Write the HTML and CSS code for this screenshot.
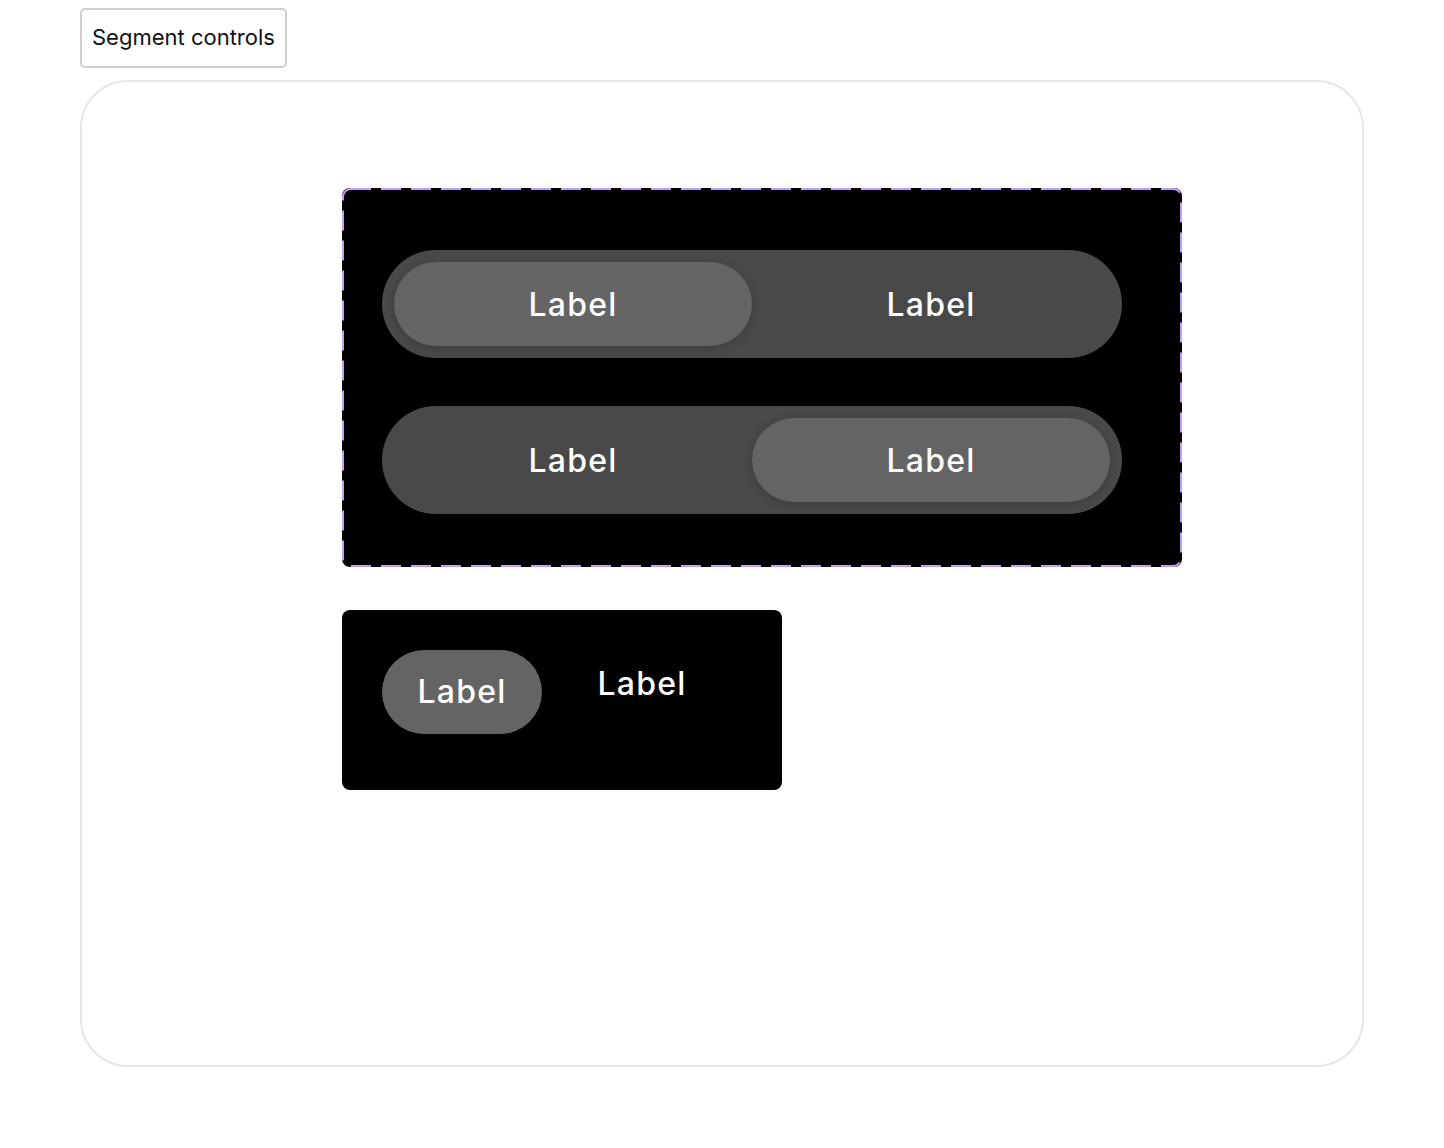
FILE: index.html
```html
<!DOCTYPE html>
<html>
<head>
<meta charset="utf-8">
<link rel="stylesheet" href="styles.css">
</head>
<body>
<div class="page">
  <button class="title-btn">Segment controls</button>
  <div class="card">
    <div class="demo">
      <svg class="dash" width="840" height="379" viewBox="0 0 840 379" aria-hidden="true">
        <rect x="1" y="1" width="838" height="377" rx="8" ry="8" fill="none" stroke="#c49bff" stroke-width="2" stroke-dasharray="20 10"></rect>
      </svg>
      <div class="segment">
        <div class="seg-item active">Label</div>
        <div class="seg-item">Label</div>
      </div>
      <div class="segment">
        <div class="seg-item">Label</div>
        <div class="seg-item active">Label</div>
      </div>
    </div>
    <div class="demo2">
      <div class="pill active">Label</div>
      <div class="pill plain">Label</div>
    </div>
  </div>
</div>
</body>
</html>
```

FILE: styles.css
```css
html, body {
  margin: 0;
  padding: 0;
  background: #fff;
  font-family: Inter, "Liberation Sans", sans-serif;
}
.page {
  padding: 8px 80px 0 80px;
  display: flex;
  flex-direction: column;
  align-items: flex-start;
  gap: 12px;
}
.title-btn {
  font-family: Inter, "Liberation Sans", sans-serif;
  font-size: 22px;
  color: #111;
  background: #fff;
  border: 2px solid #cfcfcf;
  border-radius: 5px;
  height: 60px;
  padding: 0 10px 3px 10px;
  margin: 0;
}
.card {
  box-sizing: border-box;
  width: 1284px;
  height: 987px;
  border: 2px solid #e6e6e6;
  border-radius: 48px;
  padding: 106px 0 0 260px;
  display: flex;
  flex-direction: column;
  align-items: flex-start;
  gap: 43px;
}
.demo {
  position: relative;
  box-sizing: border-box;
  width: 840px;
  height: 379px;
  background: #000;
  border-radius: 8px;
  padding: 62px 60px 0 40px;
  display: flex;
  flex-direction: column;
  gap: 48px;
}
.dash {
  position: absolute;
  left: 0;
  top: 0;
  pointer-events: none;
}
.segment {
  height: 108px;
  box-sizing: border-box;
  background: #494949;
  border-radius: 54px;
  padding: 12px;
  display: flex;
}
.seg-item {
  flex: 1;
  display: flex;
  align-items: center;
  justify-content: center;
  color: #fff;
  font-size: 32px;
  font-weight: 500;
  letter-spacing: 1.2px;
  border-radius: 42px;
}
.seg-item.active {
  background: #646464;
  box-shadow: 0 2px 10px rgba(0,0,0,0.18);
}
.demo2 {
  box-sizing: border-box;
  width: 440px;
  height: 180px;
  background: #000;
  border-radius: 8px;
  padding: 40px 60px 0 40px;
  display: flex;
  align-items: flex-start;
  gap: 20px;
}
.pill {
  box-sizing: border-box;
  width: 160px;
  color: #fff;
  font-size: 32px;
  font-weight: 500;
  letter-spacing: 1.2px;
  line-height: 44px;
  text-align: center;
  border-radius: 42px;
  padding: 20px 0;
}
.pill.active {
  background: #646464;
}
.pill.plain {
  padding: 12px 0;
}
```
